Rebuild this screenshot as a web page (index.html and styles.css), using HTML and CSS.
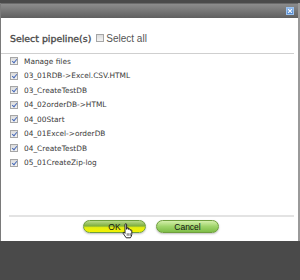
FILE: index.html
```html
<!DOCTYPE html>
<html lang="en">
<head>
  <meta charset="UTF-8">
  <title>Select pipeline(s)</title>
  <link rel="stylesheet" href="styles.css">
</head>
<body>
  <div class="dialog">
    <div class="titleBar">
      <span class="closeBtn">
        <svg width="8" height="8" viewBox="0 0 8 8"><path d="M1.5 1.5 L6.5 6.5 M6.5 1.5 L1.5 6.5" stroke="#fff" stroke-width="1.4"/></svg>
      </span>
    </div>

    <div class="content">
      <div class="heading">
        <span class="headingText">Select pipeline(s)</span>
        <label class="selectAll"><span class="box"></span>Select all</label>
      </div>
      <div class="rule"></div>

      <ul class="pipelines">
        <li><span class="box checked"></span>Manage files</li>
        <li><span class="box checked"></span>03_01RDB-&gt;Excel.CSV.HTML</li>
        <li><span class="box checked"></span>03_CreateTestDB</li>
        <li><span class="box checked"></span>04_02orderDB-&gt;HTML</li>
        <li><span class="box checked"></span>04_00Start</li>
        <li><span class="box checked"></span>04_01Excel-&gt;orderDB</li>
        <li><span class="box checked"></span>04_CreateTestDB</li>
        <li><span class="box checked"></span>05_01CreateZip-log</li>
      </ul>

      <div class="rule bottomRule"></div>
      <div class="buttons">
        <button class="pill hover">OK
          <svg class="hand" width="11" height="16" viewBox="0 0 11 16">
            <path d="M3 1.2 Q3.9 0.4 4.6 1.2 L4.6 6.2 L5 6.2 L5 5 Q5.8 4.3 6.6 5 L6.6 6.4 Q7.4 5.6 8.2 6.4 L8.2 7.2 Q9 6.6 9.8 7.3 L9.8 11.2 Q9.6 13.4 8.4 14.8 L4.2 14.8 Q3 13.2 1.2 10.4 Q0.8 9.4 1.8 9.2 L3 10.4 Z" fill="#fff" stroke="#111" stroke-width="0.9" stroke-linejoin="round"/>
            <path d="M5.2 10.2 L5.2 12.8 M6.8 10.2 L6.8 12.8 M8.3 10.2 L8.3 12.8" stroke="#111" stroke-width="0.6"/>
          </svg>
        </button>
        <button class="pill">Cancel</button>
      </div>
    </div>
  </div>
</body>
</html>
```

FILE: styles.css
```css
body {
  margin: 0;
  padding-top: 3px;
  background: #4a4a4a;
  font-family: "DejaVu Sans", Verdana, sans-serif;
  overflow: hidden;
}

.dialog {
  width: 297px;
  border-left: 1px solid #7a7a7a;
  border-right: 2px solid #9a9a9a;
  background: #fff;
}

.titleBar {
  height: 14px;
  background: linear-gradient(#8c8c8c, #5f5f5f);
  display: flex;
  justify-content: flex-end;
  align-items: center;
  padding-right: 4px;
  border-top: 1px solid #6a6a6a;
}

.closeBtn {
  width: 8px;
  height: 8px;
  display: flex;
  background: linear-gradient(#8fb8ea, #4f86cc);
  border: 1px solid #9cc2ef;
  box-sizing: border-box;
}

.closeBtn svg {
  width: 6px;
  height: 6px;
}

.content {
  padding-top: 14px;
}

.heading {
  display: flex;
  align-items: center;
  height: 12px;
  padding-left: 9px;
  margin-bottom: 9px;
}

.headingText {
  font-size: 9.4px;
  color: #4a4a4a;
  -webkit-text-stroke: 0.35px #4a4a4a;
  margin-right: 5px;
}

.selectAll {
  display: flex;
  align-items: center;
  font-family: "Liberation Sans", Arial, sans-serif;
  font-size: 10px;
  color: #555;
}

.selectAll .box {
  margin-right: 2px;
}

.rule {
  height: 1px;
  background: #cfcfcf;
  margin-right: 4px;
}

.bottomRule {
  height: 2px;
  background: #e3e3e3;
  margin-left: 8px;
}

.box {
  width: 8px;
  height: 8px;
  box-sizing: border-box;
  border: 1px solid #a6a6a6;
  background: linear-gradient(#dcdcdc, #f4f4f4);
  display: inline-block;
  position: relative;
  flex: none;
}

.box.checked::after {
  content: "";
  position: absolute;
  left: 1.5px;
  top: 0;
  width: 2px;
  height: 4px;
  border: solid #4a6cb8;
  border-width: 0 1.3px 1.3px 0;
  transform: rotate(40deg);
}

.pipelines {
  list-style: none;
  margin: 0 0 45px;
  padding: 0 0 0 9px;
}

.pipelines li {
  height: 14.5px;
  display: flex;
  align-items: center;
  font-size: 7.4px;
  color: #3a3a3a;
}

.pipelines .box {
  margin-right: 6px;
}

.buttons {
  display: flex;
  justify-content: center;
  gap: 10px;
  padding: 3px 0 8px 3px;
}

.pill {
  position: relative;
  width: 63px;
  height: 13px;
  padding: 0;
  border: 1px solid #6f9e3e;
  border-radius: 7px;
  background: linear-gradient(#d4efaa, #9fd46a 50%, #7ebd48);
  font-family: "Liberation Sans", Arial, sans-serif;
  font-size: 8.5px;
  color: #111;
  box-shadow: 0 1px 2px rgba(0, 0, 0, 0.25);
}

.pill.hover {
  background: linear-gradient(#b8d98a, #7fae3e 45%, #e4ee10 60%, #f2f200);
}

.hand {
  position: absolute;
  left: 38px;
  top: 2px;
}
```
